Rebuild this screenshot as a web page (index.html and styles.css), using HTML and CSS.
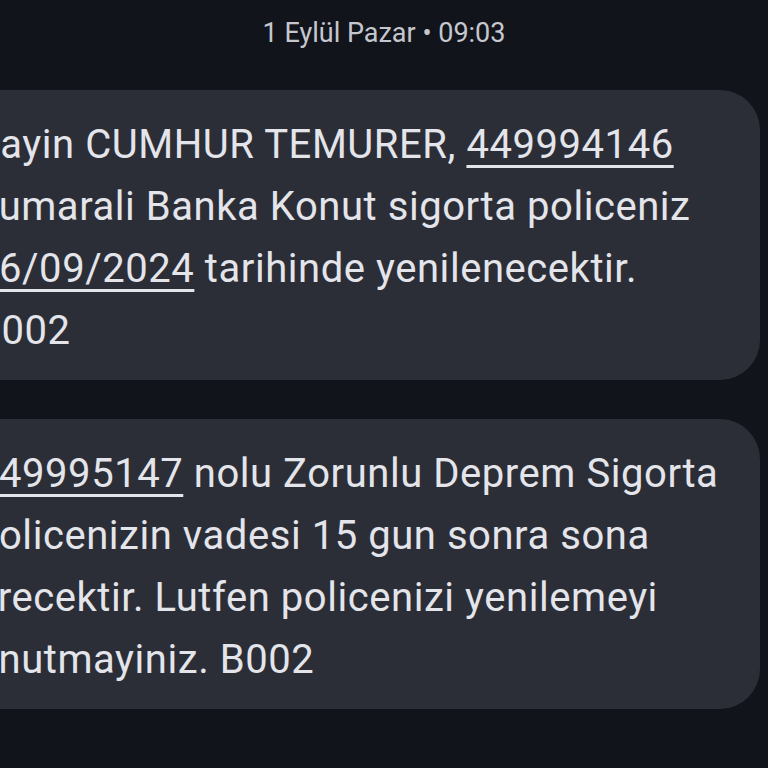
FILE: index.html
```html
<!DOCTYPE html>
<html lang="tr">
<head>
    <meta charset="UTF-8">
    <meta name="viewport" content="width=device-width, initial-scale=1.0">
    <title>Mesajlar</title>
    <link rel="stylesheet" href="styles.css">
</head>
<body>

<div class="thread">
    <div class="timestamp">1 Eylül Pazar • 09:03</div>

    <div class="bubble">
        <p>Sayin CUMHUR TEMURER, <a href="#">449994146</a><br>
        numarali Banka Konut sigorta policeniz<br>
        <a href="#">16/09/2024</a> tarihinde yenilenecektir.<br>
        B002</p>
    </div>

    <div class="bubble">
        <p><a href="#">449995147</a> nolu Zorunlu Deprem Sigorta<br>
        policenizin vadesi 15 gun sonra sona<br>
        erecektir. Lutfen policenizi yenilemeyi<br>
        unutmayiniz. B002</p>
    </div>
</div>

</body>
</html>
```

FILE: styles.css
```css
body {
    margin: 0;
    padding: 0;
    background-color: #12141b;
    font-family: Roboto, "Noto Sans", sans-serif;
    overflow: hidden;
}
.thread {
    display: flex;
    flex-direction: column;
    gap: 39px;
}
.timestamp {
    color: #c5c7cf;
    font-size: 27px;
    text-align: center;
    padding-top: 18px;
    margin-bottom: 3px;
    line-height: 30px;
}
.bubble {
    background-color: #2c2e37;
    border-radius: 40px;
    margin-left: -40px;
    margin-right: 8px;
    padding: 24px 20px 18px 16px;
}
.bubble p {
    margin: 0;
    color: #e4e5eb;
    font-size: 40px;
    line-height: 62px;
    letter-spacing: 0.55px;
    white-space: nowrap;
}
.bubble a {
    color: inherit;
    text-decoration: underline;
    text-decoration-thickness: 3px;
    text-underline-offset: 7px;
}
```
